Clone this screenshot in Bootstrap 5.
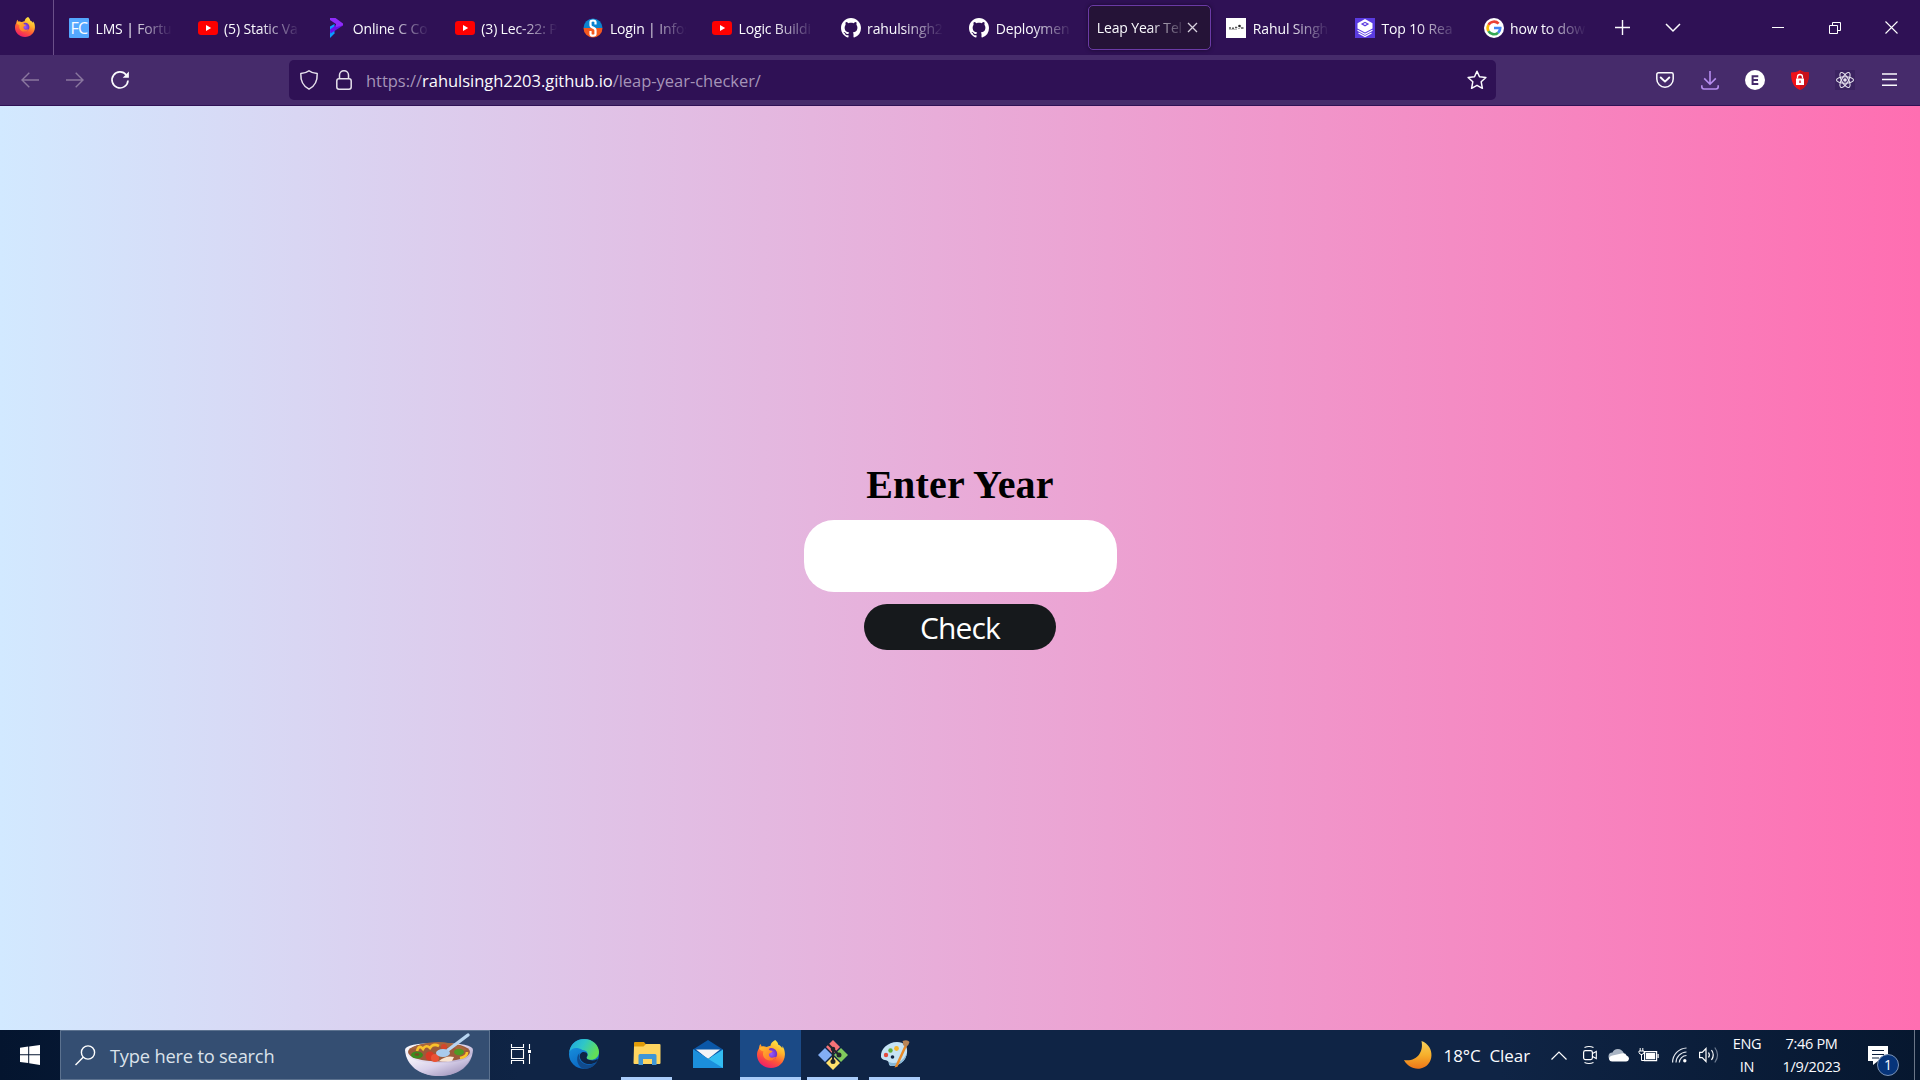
<!DOCTYPE html>
<html lang="en">
<head>
<meta charset="utf-8">
<title>Leap Year Teller</title>
<link href="https://cdn.jsdelivr.net/npm/bootstrap@5.3.0/dist/css/bootstrap.min.css" rel="stylesheet">
<style>
  body { width: 1920px; height: 1080px; overflow: hidden; font-family: "Open Sans", "Noto Sans", sans-serif; color: #fbfbfe; }
  svg { display: block; flex: none; overflow: visible; }
  .tabstrip { height: 55px; background: #2f1155; }
  .fx-home { width: 54px; border-right: 1px solid #6b5089; padding: 0 4px 2px 0; }
  .tabs { margin-left: 2px; padding-top: 1px; }
  .tab-item { flex: none; width: 128.6px; padding-left: 13px; font-size: 14px; letter-spacing: -.14px; }
  .tab-label { width: 78px; margin-left: 6.500px; overflow: hidden; white-space: nowrap; line-height: 20px; padding-top: 1px; -webkit-mask-image: linear-gradient(90deg, #000 45%, transparent 98%); mask-image: linear-gradient(90deg, #000 45%, transparent 98%); }
  .tab-open { width: 123px; height: 45px; margin: 0 2.600px 1px 3px; padding-left: 8px; border: 1px solid #6b3aa6; border-radius: 5px; background: #251337; box-shadow: 0 0 4px rgba(0,0,0,.45); }
  .tab-open .tab-label { width: 86px; margin-left: 0; -webkit-mask-image: linear-gradient(90deg, #000 60%, transparent 105%); mask-image: linear-gradient(90deg, #000 60%, transparent 105%); }
  .fc { width: 20px; height: 20px; background: #54a8ff; border-radius: 1px; font: 16px/21px "Open Sans", sans-serif; letter-spacing: -.6px; text-align: center; flex: none; }
  .win-btn { width: 57px; height: 54px; }
  .toolbar { height: 51px; background: #462b6b; border-bottom: 1px solid #2f1155; padding: 0 8px 0 7px; }
  .tool-cell { width: 45px; height: 50px; }
  .urlbar { width: 1207px; height: 40px; margin-left: 147px; background: #2f1155; border-radius: 5px; padding: 0 9px 0 11px; }
  .url-text { font-size: 16.500px; letter-spacing: -.03px; color: #a594b8; margin-left: 14px; padding-top: 3px; white-space: nowrap; }
  .url-text b { font-weight: 400; color: #fbfbfe; }
  .page { height: 924px; background: linear-gradient(90deg, #d2e9ff, #ff6eb1); padding-top: 356px; }
  .page h1 { font: bold 40px/46px "Liberation Serif", serif; color: #000; margin: 0 0 12px; letter-spacing: .2px; }
  .year-input { width: 313px; height: 72px; border: 0; border-radius: 30px; background: #fff; }
  .check-btn { width: 192px; height: 46px; margin-top: 12px; border: 0; border-radius: 23px; background: #16191c; color: #fff; font: 30px/46px "Open Sans", sans-serif; letter-spacing: -.9px; padding: 1px 0 0; }
  .taskbar { height: 50px; background: linear-gradient(90deg, #04152f 0, #0f2445 520px, #0f2445 1500px, #06172f 1920px); }
  .start-btn { width: 60px; }
  .search-box { width: 430px; background: #344e72; border: 1px solid #5c728f; padding: 0 15px 0 14px; }
  .search-text { font-size: 18.300px; color: #dbe2ea; margin-left: 14px; letter-spacing: -.2px; padding-top: 1px; }
  .task-btn { width: 62px; border-bottom: 3px solid transparent; }
  .task-line { width: 51px; margin: 0 5px 0 6px; border-bottom-color: #a9ccfa; }
  .task-active { width: 61px; margin-left: 1px; background: #1b4a86; border-bottom-color: #a9ccfa; }
  .weather { font-size: 17px; letter-spacing: -.05px; padding-top: 2px; white-space: pre; width: 107.500px; margin-left: 12px; }
  .clock { font-size: 14.500px; line-height: 23px; letter-spacing: -.3px; text-align: center; }
  .lang { width: 56px; }
  .datetime { width: 73px; }
  .actions { width: 66px; height: 50px; }
  .peek { width: 6px; height: 50px; border-left: 1px solid #6a7688; }
  .badge-count { left: 29px; top: 24px; width: 22px; height: 22px; border-radius: 50%; background: #06347a; border: 1px solid #7b93b5; font-size: 14px; line-height: 20px; text-align: center; }
</style>
<script src="https://cdn.jsdelivr.net/npm/bootstrap@5.3.0/dist/js/bootstrap.bundle.min.js"></script>
</head>
<body class="m-0 d-flex flex-column">
<svg width="0" height="0" class="position-absolute">
  <defs>
    <linearGradient id="gFox" x1=".8" y1="0" x2=".3" y2="1"><stop offset="0" stop-color="#fff04a"/><stop offset=".35" stop-color="#ffb32c"/><stop offset=".65" stop-color="#ff5a35"/><stop offset="1" stop-color="#ee1a6c"/></linearGradient>
    <linearGradient id="gFox2" x1="0" y1="0" x2="1" y2="1"><stop offset="0" stop-color="#ffc02e"/><stop offset="1" stop-color="#ff6b2c"/></linearGradient>
    <radialGradient id="gOrb"><stop offset="0" stop-color="#9a5bff"/><stop offset="1" stop-color="#6a2fc4"/></radialGradient>
    <linearGradient id="gEdgeA" x1="0" y1="0" x2="1" y2=".4"><stop offset="0" stop-color="#1fa4e0"/><stop offset=".5" stop-color="#2fc6c8"/><stop offset="1" stop-color="#62df57"/></linearGradient>
    <linearGradient id="gEdgeB" x1="0" y1="0" x2=".5" y2="1"><stop offset="0" stop-color="#1b9be4"/><stop offset="1" stop-color="#0a64c0"/></linearGradient>
    <linearGradient id="gMoon" x1="0" y1="0" x2="0" y2="1"><stop offset="0" stop-color="#f6cf5a"/><stop offset=".5" stop-color="#f6b02c"/><stop offset="1" stop-color="#ee7518"/></linearGradient>
    <linearGradient id="gBowl" x1="0" y1="0" x2="1" y2="1"><stop offset="0" stop-color="#fff"/><stop offset=".5" stop-color="#d8d0ea"/><stop offset="1" stop-color="#8f82ad"/></linearGradient>
    <symbol id="fox" viewBox="0 0 28 28"><path d="M18.200 0c2 1.500 2.800 3 3.100 4.800 1.800.5 3.300 2 4 3.500.2-1 0-1.600 0-2.300 2 2.300 2.700 5.500 2.600 8.700C27.700 22.500 21.500 28 14 28 6.200 28 0 22.300 0 14.800c0-2.700.8-4.800 2-6.600.1-1.900.6-3.200 1.600-4.200.2 1 .6 1.800 1.200 2.400 1.800-.4 3.200-.2 4.700.5l4-1.100C13.600 3.500 15.500 1.400 18.200 0z" fill="url(#gFox)"/><circle cx="14.200" cy="14" r="6" fill="url(#gOrb)"/><path d="M2 8.200c2-1.800 4.800-2 7.300-.8 1.600-.6 3.300-1 4.700-.5-1.300.8-2 1.700-2.100 2.900 1 .9 2.500.6 3.700 1.200-.4 1.700-2.700 1.800-3.500 2.800-.6 1.200.2 3 1.700 3.600 2 .8 3.700-.4 5.300-.4-1.300 2.400-3.500 3.600-6.200 3.400C7.500 20 4.800 15.600 6.500 11.400 4.800 11 3.200 10 2 8.200z" fill="url(#gFox2)"/></symbol>
    <symbol id="yt" viewBox="0 0 20 20"><rect y="3" width="20" height="14" rx="3.200" fill="#f00"/><path d="M8 7v6l5.200-3z" fill="#fff"/></symbol>
    <symbol id="gh" viewBox="0 0 16 16"><path fill="#fff" d="M8 0C3.580 0 0 3.580 0 8c0 3.540 2.290 6.530 5.470 7.590.4.070.55-.17.55-.38 0-.19-.01-.82-.01-1.490-2.010.37-2.530-.49-2.690-.94-.09-.23-.48-.94-.82-1.130-.28-.15-.68-.52-.01-.53.630-.01 1.080.58 1.230.82.720 1.210 1.870.87 2.330.66.070-.52.280-.87.510-1.070-1.780-.2-3.640-.89-3.640-3.950 0-.87.310-1.590.82-2.150-.08-.2-.36-1.020.08-2.120 0 0 .67-.21 2.200.82.640-.18 1.320-.27 2-.27s1.360.09 2 .27c1.530-1.040 2.200-.82 2.200-.82.440 1.100.16 1.920.08 2.120.51.560.82 1.270.82 2.150 0 3.070-1.870 3.750-3.650 3.950.29.250.54.730.54 1.480 0 1.070-.01 1.930-.01 2.200 0 .21.150.46.550.38A8.010 8.010 0 0 0 16 8c0-4.420-3.580-8-8-8z"/></symbol>
  </defs>
</svg>

<!-- Tab strip -->
<header class="tabstrip d-flex align-items-center">
  <div class="fx-home h-100 d-flex align-items-center justify-content-center"><svg width="20" height="20"><use href="#fox"/></svg></div>
  <div class="tabs d-flex align-items-center">
    <div class="tab-item d-flex align-items-center"><div class="fc">FC</div><div class="tab-label">LMS | Fortun</div></div>
    <div class="tab-item d-flex align-items-center"><svg width="20" height="20"><use href="#yt"/></svg><div class="tab-label">(5) Static Va</div></div>
    <div class="tab-item d-flex align-items-center"><svg width="20" height="20" viewBox="0 0 20 20"><path d="M4 8.500l4.500-2.500v9.500L4 20z" fill="#0b9cff"/><path d="M4 11.500l6-4.500 7 .5-12.500 8z" fill="#6a10ea"/><path d="M4 0h5.500L17 5.500v2L10 9V6L4 2z" fill="#8f2bfa"/></svg><div class="tab-label">Online C Co</div></div>
    <div class="tab-item d-flex align-items-center"><svg width="20" height="20"><use href="#yt"/></svg><div class="tab-label">(3) Lec-22: P</div></div>
    <div class="tab-item d-flex align-items-center"><svg width="20" height="20" viewBox="0 0 20 20"><path d="M.5 10a9.500 9.500 0 0 1 19 0z" fill="#0b83cf"/><path d="M.5 10a9.500 9.500 0 0 0 19 0z" fill="#f4591f"/><path d="M12.500 6.500V4q0-1.500-2.500-1.500T7.500 4v3.200q0 1.500 2.500 2.400t2.500 2.700V16q0 1.700-2.500 1.700T7.500 16v-3" stroke="#fff" stroke-width="2.200" fill="none"/></svg><div class="tab-label">Login | Infos</div></div>
    <div class="tab-item d-flex align-items-center"><svg width="20" height="20"><use href="#yt"/></svg><div class="tab-label">Logic Buildi</div></div>
    <div class="tab-item d-flex align-items-center"><svg width="20" height="20"><use href="#gh"/></svg><div class="tab-label">rahulsingh2</div></div>
    <div class="tab-item d-flex align-items-center"><svg width="20" height="20"><use href="#gh"/></svg><div class="tab-label">Deploymen</div></div>
    <div class="tab-item tab-open d-flex align-items-center"><div class="tab-label">Leap Year Tel</div><svg class="ms-1" width="11" height="11" viewBox="0 0 11 11"><path d="M1 1l9 9M10 1l-9 9" stroke="#d8d2de" stroke-width="1.300"/></svg></div>
    <div class="tab-item d-flex align-items-center"><svg width="20" height="20" viewBox="0 0 20 20"><path d="M0 0h20v20H0z" fill="#fff"/><path d="M3 10h2M6 10.300h2M9 9.500h2M15 10h2.500" stroke="#555" stroke-width="1.600"/><path d="M3 11.300h8M11.500 9.500l1.500 1.500 1.500-1.500" stroke="#999" stroke-width=".8" fill="none"/><circle cx="13.500" cy="8" r="1.300" fill="#222"/></svg><div class="tab-label">Rahul Singh</div></div>
    <div class="tab-item d-flex align-items-center"><svg width="20" height="20" viewBox="0 0 20 20"><path d="M0 0h20v20H0z" fill="#5a3be0"/><path d="M10 1l7.500 4.200v5.300L10 14.500l-7.500-4V5.200z" fill="#fff"/><path d="M10 3.700L14.200 6 10 8.400 5.800 6z" fill="#5a3be0"/><path d="M10 5l1.800 1L10 7 8.200 6z" fill="#fff"/><path d="M2.500 12.300l7.500 4 7.500-4M3.500 14.900l6.500 3.600 6.500-3.600" stroke="#fff" stroke-width="1.200" fill="none"/></svg><div class="tab-label">Top 10 Rea</div></div>
    <div class="tab-item d-flex align-items-center"><svg width="20" height="20" viewBox="0 0 20 20"><circle cx="10" cy="10" r="10" fill="#fff"/><g fill="none" stroke-width="2.700"><path d="M14.600 5.700A6.300 6.300 0 0 0 4.500 6.900" stroke="#ea4335"/><path d="M4.500 6.900a6.300 6.300 0 0 0 0 6.200" stroke="#fbbc05"/><path d="M4.500 13.100a6.300 6.300 0 0 0 9.600 1.600" stroke="#34a853"/><path d="M14.100 14.700A6.300 6.300 0 0 0 16.200 10H10" stroke="#4285f4"/></g></svg><div class="tab-label">how to dow</div></div>
  </div>
  <svg width="15" height="15" viewBox="0 0 15 15" style="margin-left:16px"><path d="M7.500 0v15M0 7.500h15" stroke="#fbfbfe" stroke-width="1.400"/></svg>
  <svg width="16" height="9" viewBox="0 0 16 9" style="margin-left:35px"><path d="M1 1l7 7 7-7" stroke="#fbfbfe" stroke-width="1.500" fill="none"/></svg>
  <div class="d-flex ms-auto">
    <div class="win-btn d-flex align-items-center justify-content-center"><svg width="12" height="12"><path d="M0 5.500h12" stroke="#fff"/></svg></div>
    <div class="win-btn d-flex align-items-center justify-content-center"><svg width="12" height="12"><path d="M.5 3.500h8v8h-8zM3.500 3.500v-3h8v8h-3" stroke="#fff" fill="none"/></svg></div>
    <div class="win-btn d-flex align-items-center justify-content-center"><svg width="13" height="13"><path d="M.5.5l12 12M12.500.5l-12 12" stroke="#fff" stroke-width="1.100"/></svg></div>
  </div>
</header>

<!-- Navigation toolbar -->
<nav class="toolbar d-flex align-items-center">
  <div class="tool-cell d-flex align-items-center justify-content-center"><svg width="18" height="16" viewBox="0 0 18 16"><path d="M18 8H1M8.300.8L1 8l7.300 7.200" stroke="#8a779f" stroke-width="1.400" fill="none"/></svg></div>
  <div class="tool-cell d-flex align-items-center justify-content-center"><svg width="18" height="16" viewBox="0 0 18 16"><path d="M0 8h17M9.700.8L17 8l-7.300 7.200" stroke="#8a779f" stroke-width="1.400" fill="none"/></svg></div>
  <div class="tool-cell d-flex align-items-center justify-content-center"><svg width="18" height="18" viewBox="0 0 18 18"><path d="M15.300 4A8 8 0 1 0 17 9.500" stroke="#fbfbfe" stroke-width="1.700" fill="none"/><path d="M17.900.5v6.200h-6.200z" fill="#fbfbfe"/></svg></div>
  <div class="urlbar d-flex align-items-center">
    <svg width="18" height="20" viewBox="0 0 18 20"><path d="M9 .8c2 1.700 4.800 2.600 8.200 2.800.3 7-2.200 12.500-8.200 15.600C3 16.100.5 10.600.8 3.600 4.200 3.400 7 2.500 9 .8z" stroke="#e6e1ec" stroke-width="1.500" stroke-linejoin="round" fill="none"/></svg>
    <svg width="16" height="20" viewBox="0 0 16 20" style="margin-left:18px"><rect x=".8" y="8.800" width="14.400" height="10.400" rx="2.200" stroke="#e6e1ec" stroke-width="1.500" fill="none"/><path d="M3.500 8.500V5a4.500 4.300 0 0 1 9 0v3.500" stroke="#e6e1ec" stroke-width="1.500" fill="none"/></svg>
    <div class="url-text">https://<b>rahulsingh2203.github.io</b>/leap-year-checker/</div>
    <svg class="ms-auto" width="20" height="20" viewBox="0 0 20 20"><path d="M10 1.200l2.500 5.600 6.400.7-4.700 4.300 1.200 6.500L10 15.300l-5.400 3 1.200-6.500L1.100 7.500l6.400-.7z" stroke="#fbfbfe" stroke-width="1.500" stroke-linejoin="round" fill="none"/></svg>
  </div>
  <div class="d-flex ms-auto">
    <div class="tool-cell d-flex align-items-center justify-content-center"><svg width="18" height="16" viewBox="0 0 18 16"><path d="M2.500.8h13q1.700 0 1.700 1.700V7A8.200 8.200 0 0 1 .8 7V2.500Q.8.800 2.500.800z" stroke="#fbfbfe" stroke-width="1.500" fill="none"/><path d="M4.700 5.500L9 9.600l4.300-4.100" stroke="#fbfbfe" stroke-width="1.900" stroke-linecap="round" stroke-linejoin="round" fill="none"/></svg></div>
    <div class="tool-cell d-flex align-items-center justify-content-center"><svg width="18" height="19" viewBox="0 0 18 19"><path d="M9 0v13M3.200 7.400L9 13.200l5.800-5.800M.8 14.200v1.600q0 2.200 2.200 2.200h12q2.200 0 2.200-2.200v-1.600" stroke="#b78df0" stroke-width="1.600" fill="none"/></svg></div>
    <div class="tool-cell d-flex align-items-center justify-content-center"><svg width="20" height="20" viewBox="0 0 20 20"><circle cx="10" cy="10" r="10" fill="#fff"/><path d="M13.300 6.200H7.600v7.700h5.700M7.600 10H13" stroke="#462b6b" stroke-width="2" fill="none"/></svg></div>
    <div class="tool-cell d-flex align-items-center justify-content-center"><svg width="18" height="20" viewBox="0 0 18 20"><path d="M9 0c2.500 1.800 5.500 2.500 9 2.500C18 11 16 17 9 20 2 17 0 11 0 2.500 3.500 2.500 6.500 1.800 9 0z" fill="#f01018"/><path d="M9 0c2.500 1.800 5.500 2.500 9 2.500C18 11 16 17 9 20z" fill="#c9101a"/><path d="M5 8.500h8V15H5z" fill="#fff"/><path d="M6.500 8.500V7a2.500 2.500 0 0 1 5 0v1.500" stroke="#fff" stroke-width="1.300" fill="none"/><path d="M9 10.500V13" stroke="#d91018" stroke-width="1.300"/></svg></div>
    <div class="tool-cell d-flex align-items-center justify-content-center"><svg width="20" height="20" viewBox="0 0 20 20"><path d="M0 0h20v20H0z" fill="#3b2360"/><g stroke="#e6e2ee" stroke-width="1.100" fill="none"><ellipse cx="10" cy="10" rx="8.500" ry="3.300"/><ellipse cx="10" cy="10" rx="8.500" ry="3.300" transform="rotate(60 10 10)"/><ellipse cx="10" cy="10" rx="8.500" ry="3.300" transform="rotate(120 10 10)"/></g><circle cx="10" cy="10" r="1.800" fill="#e6e2ee"/></svg></div>
    <div class="tool-cell d-flex align-items-center justify-content-center"><svg width="15" height="14" viewBox="0 0 15 14"><path d="M0 1h15M0 6.500h15M0 12.200h15" stroke="#fbfbfe" stroke-width="1.400"/></svg></div>
  </div>
</nav>

<!-- Page content -->
<main class="page d-flex flex-column align-items-center">
  <h1>Enter Year</h1>
  <input class="year-input" type="text" aria-label="Year">
  <button class="check-btn">Check</button>
</main>

<!-- Taskbar -->
<footer class="taskbar d-flex">
  <div class="start-btn d-flex align-items-center justify-content-center"><svg width="20" height="20" viewBox="0 0 20 20"><path d="M0 2.800L8.200 1.600V9.300H0zM9.200 1.500L20 0v9.300H9.200zM0 10.300h8.200V18L0 17zM9.200 10.300H20V20L9.200 18.300z" fill="#fff"/></svg></div>
  <div class="search-box d-flex align-items-center">
    <svg width="21" height="21" viewBox="0 0 21 21"><circle cx="13" cy="7.500" r="6.600" stroke="#fff" stroke-width="1.400" fill="none"/><path d="M8.200 12.200L.5 20" stroke="#fff" stroke-width="1.400"/></svg>
    <div class="search-text">Type here to search</div>
    <svg class="ms-auto" width="70" height="44" viewBox="0 0 70 44"><path d="M1 17q0-7 34-7t34 7c-1 15-14 26-34 26S2 32 1 17z" fill="url(#gBowl)"/><ellipse cx="35" cy="19" rx="31" ry="9.500" fill="#9c5a3a"/><path d="M6 16q8-6 28-7 22 1 29 8-8 3-12-2-15-3-30 0z" fill="#a9663c"/><g fill="none" stroke="#f9c22b" stroke-width="2.600"><path d="M13 18q2-7 6-2 3-5 7-1 3-5 9-2"/><path d="M56 25q7-1 7-6"/></g><ellipse cx="13" cy="22" rx="6" ry="3.500" fill="#3d8c1e"/><ellipse cx="13" cy="21.500" rx="2.500" ry="1.300" fill="#7a4a25"/><ellipse cx="55" cy="19" rx="5" ry="3.300" fill="#4e9a24"/><circle cx="26" cy="23" r="4.500" fill="#d93a25"/><circle cx="31" cy="25" r="4" fill="#ea5236"/><circle cx="40" cy="14" r="3" fill="#d4462c"/><path d="M2 21q6 9 33 9t33-9c-4 13-16 22-33 22S5 33 2 21z" fill="url(#gBowl)"/><path d="M35 28q7-6 15-4l-2 4q-6 1-13 0z" fill="#f7e3cf"/><path d="M64 2L44 17" stroke="#b8d5f1" stroke-width="3.400" stroke-linecap="round"/><ellipse cx="39" cy="20" rx="7" ry="4" fill="#a9cbed"/></svg>
  </div>
  <div class="task-btn d-flex align-items-center justify-content-center"><svg width="20" height="20" viewBox="0 0 20 20"><path d="M.5 5.500h12v9H.5zM.5 0v3.500h12V0M.5 20v-3.500h12V20M18.500 0v5M18.500 10v10" stroke="#fff" stroke-width="1.100" fill="none"/><path d="M17 6h3v3h-3z" fill="#fff"/></svg></div>
  <div class="task-btn d-flex align-items-center justify-content-center" style="margin-left:1px"><svg width="30" height="30" viewBox="0 0 30 30"><circle cx="15" cy="15" r="15" fill="url(#gEdgeB)"/><path d="M.3 13C1.500 5 7.500 0 15 0c9 0 15 6.500 15 13 0 5-4 7.800-8 7.800-3.500 0-5.200-1.300-4-3 2-3-.3-6.800-4.500-6.800C8 8 3 8.500.3 13z" fill="url(#gEdgeA)"/><path d="M10.500 14C8 20.500 14 27 22 25.500c2.500-.4 5-1.600 6-2.500C25.500 27 21 30 15.500 30 9 29 5.500 19 10.500 14z" fill="#114a8b"/><path d="M17.800 17.800c1.500-1.600.6-4.800-3-4.800-3 0-4.500 2.500-4 5.500C12.500 24.500 19 26 24 24.500q3-.8 4.500-2.800c1-1.400 0-1.900-1-1.200-3.500 2-11.500.5-9.700-2.700z" fill="#0f2445"/></svg></div>
  <div class="task-btn task-line d-flex align-items-center justify-content-center"><svg width="28" height="24" viewBox="0 0 28 24"><path d="M1 1q0-1 1-1h9l2.500 3H27v6H1z" fill="#e09b08"/><path d="M1 4.500h9.500L13 2h13.500q1 0 1 1v18q0 1-1 1H1.500q-1 0-1-1z" fill="#ffd560"/><path d="M5.500 23V13.500Q5.500 12 7 12h15q1.500 0 1.500 1.500V23H19v-6h-9v6z" fill="#3f96d6"/></svg></div>
  <div class="task-btn d-flex align-items-center justify-content-center"><svg width="30" height="28" viewBox="0 0 30 28" style="margin-top:1px"><path d="M0 9.500L15 0l15 9.500V17H0z" fill="#0b57a7"/><path d="M3 9.500h24L15 19z" fill="#f4f4f6"/><path d="M0 9.500L15 19 30 9.500V28H0z" fill="#33bdf2"/><path d="M0 9.500L30 28H0z" fill="#1b8fdc"/></svg></div>
  <div class="task-btn task-active d-flex align-items-center justify-content-center"><svg width="28" height="28"><use href="#fox"/></svg></div>
  <div class="task-btn task-line d-flex align-items-center justify-content-center"><svg width="30" height="30" viewBox="0 0 30 30" style="margin-top:2px"><path d="M15 0l7 7-7 7-7-7z" fill="#f57278"/><path d="M7 8l7 7-7 7-7-7z" fill="#83aef5"/><path d="M23 8l7 7-7 7-7-7z" fill="#80c95d"/><path d="M15 16l7 7-7 7-7-7z" fill="#ffe06c"/><path d="M10 4l5 5v12M15 9l6 6" stroke="#20252d" stroke-width="2" fill="none"/><circle cx="15" cy="9" r="2.300" fill="#20252d"/><circle cx="15" cy="21.500" r="2.500" fill="#20252d"/><circle cx="21" cy="15" r="2.500" fill="#20252d"/></svg></div>
  <div class="task-btn task-line d-flex align-items-center justify-content-center"><svg width="30" height="28" viewBox="0 0 30 28" style="margin-top:1px"><path d="M1 17C0 9 8 2 17 2c7 0 11 4 10 11-1 8-8 13-15 13-3 0-3-2-3.500-4-.7-2.700-6.500-1-7.500-5z" fill="#c5e3f5"/><path d="M9 22q4 2 10 0c4-2 6-5 8-9-1 8-8 13-15 13-3 0-3-2-3-4z" fill="#86b6d6"/><circle cx="6" cy="15" r="2.200" fill="#e34b3e"/><circle cx="10.500" cy="10.500" r="2.200" fill="#5dad3a"/><circle cx="16.500" cy="8.500" r="2.400" fill="#f4b52b"/><circle cx="12.500" cy="17" r="1.800" fill="#0f2445"/><path d="M25 4.500L14.500 27.500l3-.8L27 6z" fill="#e98a27"/><path d="M22.500 1q5-2 7 1-.5 3-3.500 5l-3-2q.5-2-.5-4z" fill="#b98557"/></svg></div>

  <!-- Notification area -->
  <div class="d-flex align-items-center ms-auto">
    <svg width="28" height="28" viewBox="0 0 28 28"><path d="M17.500 0c14 5 13 25-1 27.500C9 28.500 3 25 0 19c12 2 20-7 17.500-19z" fill="url(#gMoon)"/></svg>
    <div class="weather">18°C  Clear</div>
    <svg width="16" height="9" viewBox="0 0 16 9"><path d="M.5 8.500L8 1l7.500 7.500" stroke="#fff" stroke-width="1.200" fill="none"/></svg>
    <svg width="14" height="18" viewBox="0 0 14 18" style="margin-left:16px"><rect x=".6" y="4.600" width="8.800" height="9" rx="1.800" stroke="#fff" stroke-width="1.200" fill="none"/><path d="M9.500 7.500l3.800-2v7l-3.800-2M1.500 1.500q4.500-2 9 0M1.500 16.500q4.500 2 9 0" stroke="#fff" stroke-width="1.100" fill="none"/></svg>
    <svg width="20" height="14" viewBox="0 0 20 14" style="margin-left:12px"><path d="M3.500 12.500a4 4 0 0 1 0-8Q5 .8 9 1t6 4.500L8 12.500z" fill="#a9b4c3"/><path d="M3 13.500q-2.500 0-3-2.500 0-3 3.500-3.500l9-2q4-1 5 2 2.500.8 2.500 3-.3 3-3 3z" fill="#fff"/></svg>
    <svg width="20" height="14" viewBox="0 0 20 14" style="margin-left:10px"><path d="M5.600 3.600h12v9h-12z" stroke="#fff" stroke-width="1.200" fill="none"/><path d="M7 5h9.200v6.200H7zM18.500 6h1.200v4h-1.200z" fill="#fff"/><path d="M1.200 0v3M3.800 0v3M0 3h5v1.500Q4.500 6.500 2.500 6.500T0 4.500zM2.500 6v6.500h3" stroke="#fff" stroke-width="1" fill="none"/></svg>
    <svg width="15" height="16" viewBox="0 0 15 16" style="margin-left:13px"><g fill="none" stroke="#e3e8ef" stroke-width="1.200"><path d="M.6 15.500A14.500 14.500 0 0 1 14.500 1"/><path d="M4 15.500A10.800 10.800 0 0 1 14.500 5"/><path d="M7.300 15.500A7.400 7.400 0 0 1 14.500 8.500"/></g><circle cx="12.800" cy="13.800" r="1.700" fill="#fff"/></svg>
    <svg width="20" height="16" viewBox="0 0 20 16" style="margin-left:12px"><path d="M.6 5.300h2.600L7 1.500v13l-3.800-3.800H.6z" stroke="#fff" stroke-width="1.200" fill="none"/><path d="M9.500 5.500q1.700 2.500 0 5M12.500 3q3.500 5 0 10" stroke="#fff" stroke-width="1.200" fill="none"/><path d="M15.800.5q5.500 7.500 0 15" stroke="#6f7d93" stroke-width="1.200" fill="none"/></svg>
    <div class="clock lang">ENG<br>IN</div>
    <div class="clock datetime">7:46 PM<br>1/9/2023</div>
    <div class="actions position-relative">
      <svg width="61" height="50" viewBox="0 0 61 50"><path d="M20 16h20v15H30l-5 4v-4h-5z" fill="#fff"/><path d="M24 20.500h12M24 24.500h12M24 28h7" stroke="#0b1e3c" stroke-width="1.200"/></svg>
      <div class="badge-count position-absolute">1</div>
    </div>
    <div class="peek"></div>
  </div>
</footer>
</body>
</html>
